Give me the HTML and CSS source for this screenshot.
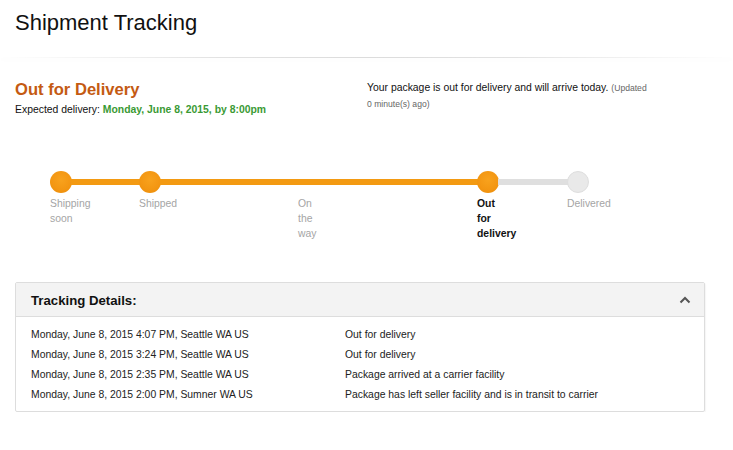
FILE: index.html
```html
<!DOCTYPE html>
<html lang="en">
<head>
<meta charset="utf-8">
<title>Shipment Tracking</title>
<link rel="stylesheet" href="styles.css">
</head>
<body>
<div class="page">
  <h1 class="title">Shipment Tracking</h1>
  <div class="divider"></div>

  <div class="status-row">
    <div class="status-left">
      <h2 class="status-title">Out for Delivery</h2>
      <p class="expected">Expected delivery: <span class="expected-date">Monday, June 8, 2015, by 8:00pm</span></p>
    </div>
    <div class="status-right">
      <p class="message">Your package is out for delivery and will arrive today. <span class="updated">(Updated</span> <span class="updated">0 minute(s) ago)</span></p>
    </div>
  </div>

  <div class="progress">
    <div class="step step-1">
      <div class="node"><span class="dot done"></span><span class="seg done"></span></div>
      <div class="label">Shipping soon</div>
    </div>
    <div class="step step-2">
      <div class="node"><span class="dot done"></span><span class="seg done"></span></div>
      <div class="label">Shipped</div>
    </div>
    <div class="step step-3">
      <div class="node"><span class="seg done"></span></div>
      <div class="label">On the way</div>
    </div>
    <div class="step step-4">
      <div class="node"><span class="dot done"></span><span class="seg todo"></span></div>
      <div class="label current">Out for delivery</div>
    </div>
    <div class="step step-5">
      <div class="node"><span class="dot todo"></span></div>
      <div class="label">Delivered</div>
    </div>
  </div>

  <div class="details">
    <div class="details-head">
      <span class="details-title">Tracking Details:</span>
      <svg class="chevron" width="12" height="8" viewBox="0 0 12 8" aria-hidden="true">
        <polyline points="1.5,6.5 6,2 10.5,6.5" fill="none" stroke="#555" stroke-width="2"/>
      </svg>
    </div>
    <div class="details-body">
      <div class="when">Monday, June 8, 2015 4:07 PM, Seattle WA US</div>
      <div class="what">Out for delivery</div>
      <div class="when">Monday, June 8, 2015 3:24 PM, Seattle WA US</div>
      <div class="what">Out for delivery</div>
      <div class="when">Monday, June 8, 2015 2:35 PM, Seattle WA US</div>
      <div class="what">Package arrived at a carrier facility</div>
      <div class="when">Monday, June 8, 2015 2:00 PM, Sumner WA US</div>
      <div class="what">Package has left seller facility and is in transit to carrier</div>
    </div>
  </div>
</div>
</body>
</html>
```

FILE: styles.css
```css
* { box-sizing: border-box; }

html, body {
  margin: 0;
  padding: 0;
  background: #ffffff;
}

body {
  font-family: "Liberation Sans", Arial, sans-serif;
  color: #111;
}

.page {
  padding: 10px 0 0 0;
}

.title {
  margin: 0 0 0 15px;
  font-size: 22px;
  line-height: 26px;
  font-weight: normal;
  color: #111;
}

.divider {
  margin-top: 21px;
  height: 1px;
  background: linear-gradient(to right, rgba(221,221,221,0) 0%, #e2e2e2 30%, #dcdcdc 50%, #e2e2e2 70%, rgba(221,221,221,0) 100%);
  box-shadow: 0 2px 4px rgba(0,0,0,0.03);
}

.status-row {
  display: flex;
  margin: 22px 0 0 15px;
}

.status-left {
  width: 352px;
}

.status-title {
  margin: 0;
  font-size: 16.6px;
  line-height: 20px;
  font-weight: bold;
  color: #c45a12;
}

.expected {
  margin: 3px 0 0 0;
  font-size: 10.4px;
  line-height: 14px;
  color: #111;
}

.expected-date {
  font-weight: bold;
  color: #3a9a34;
}

.status-right {
  width: 282px;
}

.message {
  margin: 0;
  font-size: 10.4px;
  line-height: 15px;
  color: #111;
}

.updated {
  font-size: 8.6px;
  line-height: 15px;
  color: #666;
}

.progress {
  display: flex;
  margin: 54px 0 0 50px;
}

.step-1 { width: 89px; }
.step-2 { width: 159px; }
.step-3 { width: 179px; }
.step-4 { width: 90px; }
.step-5 { width: 60px; }

.node {
  display: flex;
  align-items: center;
  height: 22px;
}

.dot {
  flex: none;
  width: 22px;
  height: 22px;
  border-radius: 50%;
}

.dot.done {
  background: radial-gradient(circle at 50% 40%, #f8a21d 0%, #f39612 60%, #e98a06 100%);
}

.dot.todo {
  background: #e9e9e9;
  border: 1px solid #dedede;
}

.seg {
  flex: 1;
  height: 6px;
  margin: 0 -1px;
}

.seg.done { background: #f39a12; }
.seg.todo { background: #dfdfdf; }

.label {
  width: min-content;
  margin-top: 3px;
  font-size: 10.4px;
  line-height: 15px;
  color: #a5a5a5;
}

.label.current {
  width: 20px;
  font-weight: bold;
  color: #111;
}

.details {
  width: 690px;
  margin: 41px 0 0 15px;
  border: 1px solid #dddddd;
  border-radius: 2px;
  box-shadow: 1px 1px 1px rgba(0,0,0,0.04);
}

.details-head {
  display: flex;
  justify-content: space-between;
  align-items: center;
  padding: 10px 13px 7px 15px;
  background: #f3f3f3;
  border-bottom: 1px solid #dddddd;
}

.details-title {
  font-size: 13.2px;
  line-height: 16px;
  font-weight: bold;
  color: #111;
}

.chevron {
  display: block;
  margin-top: -2px;
}

.details-body {
  display: grid;
  grid-template-columns: 314px 1fr;
  padding: 8px 15px 6px 15px;
  font-size: 10.4px;
  line-height: 20px;
  color: #222;
}
```
